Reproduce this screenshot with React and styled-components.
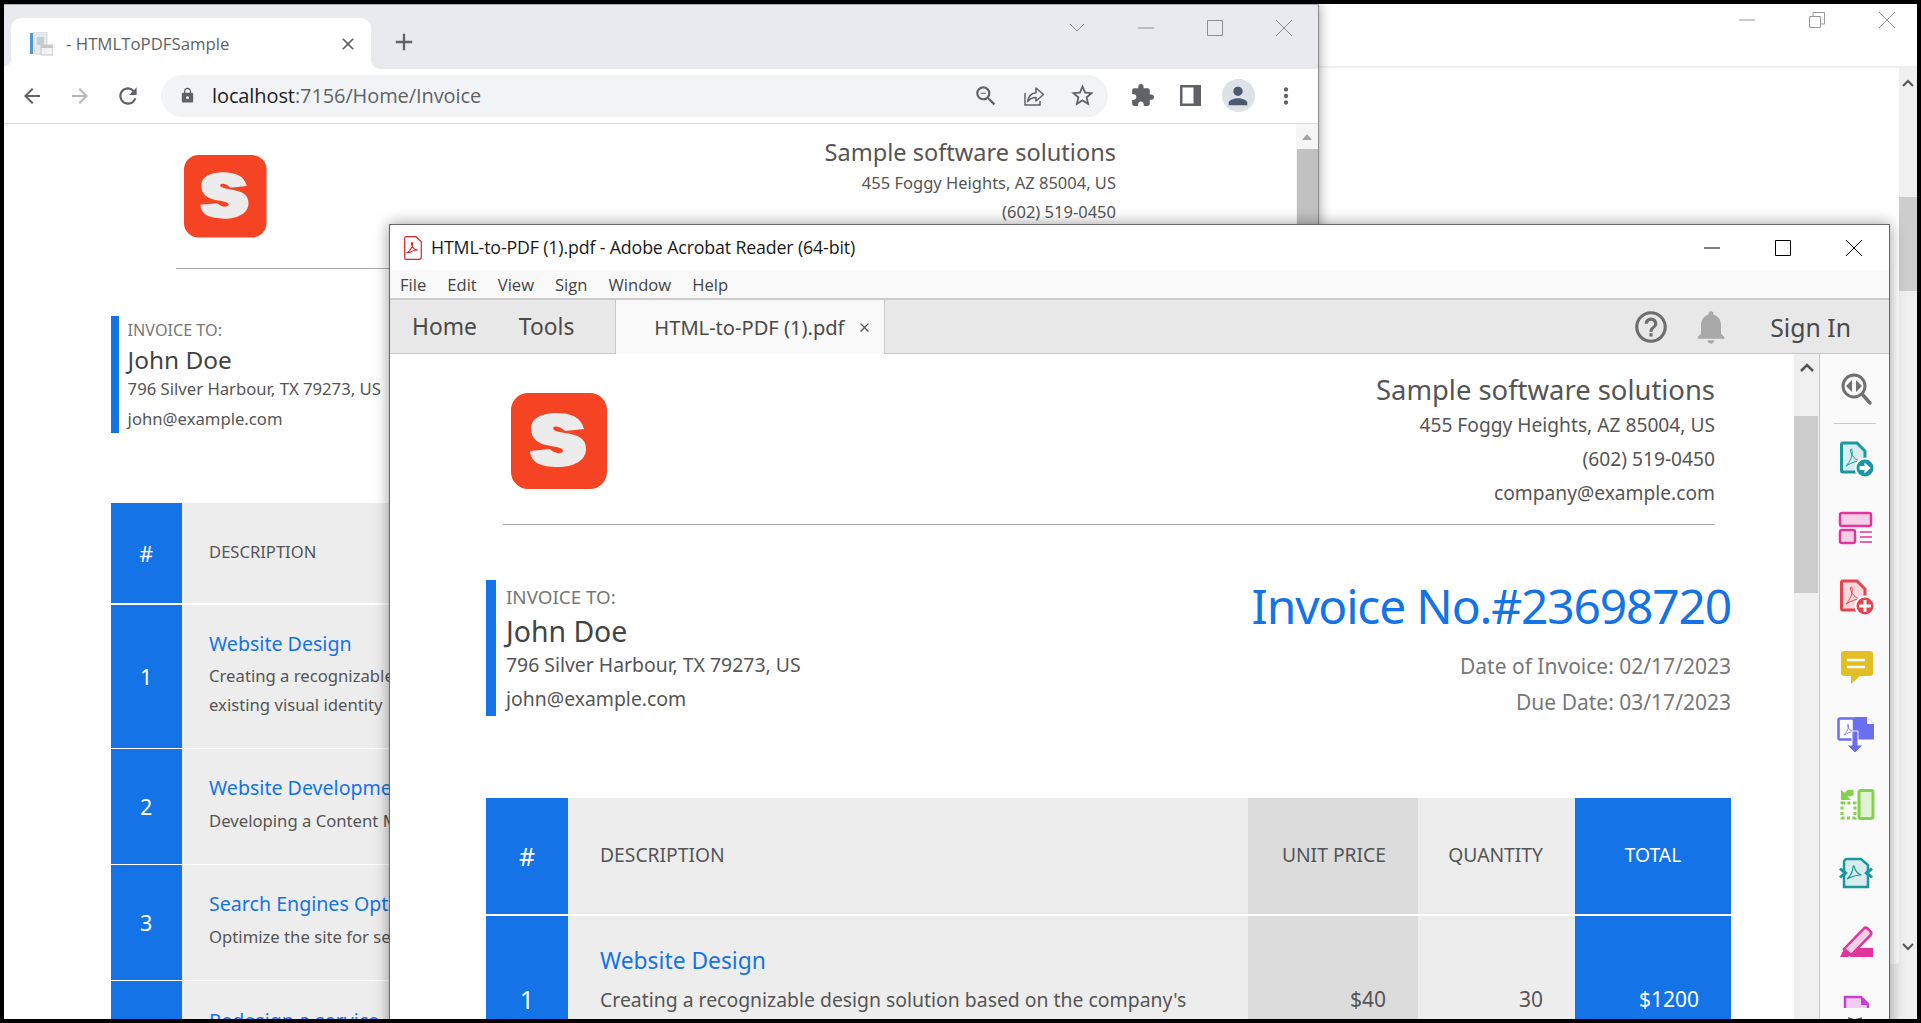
import React from 'react'
import styled, { createGlobalStyle } from 'styled-components'
import {
  MdArrowBack, MdArrowForward, MdRefresh, MdLock, MdZoomOut, MdStarBorder, MdExtension,
  MdPerson, MdMoreVert, MdClose, MdAdd, MdHelpOutline, MdNotifications,
} from 'react-icons/md'

const u = (n) => `calc(var(--k) * ${n}px)`
const BLUE = '#1473e6'
const SHEET_FONT = '"Noto Sans", "Open Sans", sans-serif'
const UI_FONT = '"Open Sans", "Noto Sans", sans-serif'

const Global = createGlobalStyle`
  html, body { margin: 0; padding: 0; background: #000; overflow: hidden; }
  * { box-sizing: border-box; }
`

const Screen = styled.div`
  position: relative;
  width: 1921px;
  height: 1023px;
  background: #000;
  overflow: hidden;
`
const Desktop = styled.div`
  position: absolute;
  left: 4px;
  top: 4px;
  width: 1913px;
  height: 1015px;
  overflow: hidden;
`

/* window at the very back */
const BackWindow = styled.div`
  position: absolute;
  inset: 0;
  display: flex;
  flex-direction: column;
  background: #f0f0f0;
`
const BackTitle = styled.div`
  height: 64px;
  flex: none;
  margin-right: -5px;
  background: #fff;
  border-bottom: 2px solid #f0f0f0;
  display: flex;
  justify-content: flex-end;
`
const BackControl = styled.div`
  width: 70px;
  height: 32px;
  display: flex;
  align-items: center;
  justify-content: center;
  color: #999;
`
const BackBody = styled.div`
  flex: 1;
  display: flex;
  min-height: 0;
`
const BackContent = styled.div`
  flex: 1;
  height: 896px;
  background: #fff;
  border-bottom-right-radius: 4px;
`
const BackScroll = styled.div`
  width: 18px;
  display: flex;
  flex-direction: column;
  align-items: center;
  color: #555;
  height: 885px;
`
const BackThumb = styled.div`
  width: 18px;
  height: 96px;
  margin-top: 108px;
  background: #cdcdcd;
`
const BackArrow = styled.div`
  margin-top: ${(p) => p.$top}px;
  height: 10px;
  display: flex;
`

/* chrome window */
const ChromeWindow = styled.div`
  position: absolute;
  left: 0;
  top: 0;
  width: 1315px;
  height: 1015px;
  display: flex;
  flex-direction: column;
  background: #fff;
  border-top: 1px solid #a9abad;
  border-right: 1px solid #8a8a8a;
  box-shadow: 0 0 12px rgba(0, 0, 0, 0.4);
  font-family: ${UI_FONT};
`
const TabStrip = styled.div`
  height: 64px;
  flex: none;
  display: flex;
  padding-left: 7px;
  background: #e8eaed;
`
const BrowserTab = styled.div`
  position: relative;
  width: 360px;
  height: 51px;
  margin-top: 13px;
  display: flex;
  align-items: center;
  padding-left: 19px;
  background: #fff;
  border-radius: 10px 10px 0 0;
  color: #5f6368;
  font-size: 16.8px;

  &::before,
  &::after {
    content: '';
    position: absolute;
    bottom: 0;
    width: 10px;
    height: 10px;
  }
  &::before {
    left: -7px;
    width: 7px;
    background: radial-gradient(circle at 0 0, #e8eaed 7px, #fff 7.5px);
  }
  &::after {
    right: -10px;
    background: radial-gradient(circle at 100% 0, #e8eaed 10px, #fff 10.5px);
  }
`
const TabTitle = styled.span`
  margin-left: 13px;
  flex: 1;
`
const TabClose = styled.span`
  display: flex;
  margin-right: 13px;
  color: #5f6368;
`
const NewTab = styled.span`
  display: flex;
  align-self: flex-start;
  margin: 23px 0 0 19px;
  color: #5f6368;
`
const WindowButtons = styled.div`
  margin-left: auto;
  display: flex;
  color: #8a8d91;
`
const WindowButton = styled.div`
  width: 69px;
  height: 46px;
  display: flex;
  align-items: center;
  justify-content: center;
`
const Toolbar = styled.div`
  height: 55px;
  flex: none;
  display: flex;
  align-items: center;
  padding: 0 0 1px 8px;
  gap: 8px;
  background: #fff;
  border-bottom: 1px solid #dadce0;
`
const ToolButton = styled.div`
  width: 40px;
  height: 40px;
  flex: none;
  display: flex;
  align-items: center;
  justify-content: center;
  color: ${(p) => p.$color || '#5f6368'};
`
const Omnibox = styled.div`
  width: 947px;
  height: 42px;
  margin: 0 6px 0 5px;
  padding: 0 6px 0 18px;
  display: flex;
  align-items: center;
  background: #f1f3f4;
  border-radius: 21px;
  color: #5f6368;
  font-size: 20px;
`
const Url = styled.div`
  margin-left: 16px;
  flex: 1;
  letter-spacing: -0.1px;
  b { color: #202124; font-weight: 400; }
`
const OmniActions = styled.div`
  display: flex;
  gap: 8px;
`
const Avatar = styled.div`
  width: 33px;
  height: 33px;
  border-radius: 50%;
  background: #dee1e6;
  display: flex;
  align-items: center;
  justify-content: center;
  color: #4a5a70;
`
const ChromeBody = styled.div`
  flex: 1;
  display: flex;
  min-height: 0;
`
const ChromePage = styled.div`
  flex: 1;
  overflow: hidden;
`
const ChromeScroll = styled.div`
  width: 22px;
  flex: none;
  display: flex;
  flex-direction: column;
  align-items: center;
  background: #f5f5f5;
`
const ChromeThumb = styled.div`
  width: 21px;
  flex: 1;
  margin-top: 9px;
  background: #c1c1c1;
`
const ScrollUp = styled.div`
  margin-top: ${(p) => p.$top}px;
  width: 0;
  height: 0;
  border-left: 5px solid transparent;
  border-right: 5px solid transparent;
  border-bottom: 6px solid #a3a3a3;
`

/* acrobat window */
const ReaderWindow = styled.div`
  position: absolute;
  left: 385px;
  top: 220px;
  width: 1501px;
  height: 820px;
  display: flex;
  flex-direction: column;
  background: #fff;
  border: 1px solid #666;
  box-shadow: 0 0 14px rgba(0, 0, 0, 0.4);
`
const ReaderTitle = styled.div`
  height: 45px;
  flex: none;
  display: flex;
  align-items: center;
  padding-left: 14px;
  background: #fff;
  color: #1a1a1a;
  font: 17.8px ${UI_FONT};
`
const ReaderTitleText = styled.span`
  margin-left: 9px;
  margin-top: -2px;
  letter-spacing: -0.15px;
`
const ReaderButtons = styled.div`
  margin-left: auto;
  display: flex;
  color: #000;
`
const ReaderButton = styled.div`
  width: 71px;
  height: 45px;
  display: flex;
  align-items: center;
  justify-content: center;
`
const MenuBar = styled.div`
  height: 30px;
  flex: none;
  display: flex;
  align-items: center;
  gap: 21px;
  padding-left: 10px;
  background: #f9f9f9;
  border-bottom: 2px solid #ccc;
  color: #444;
  font: 16.6px ${UI_FONT};
`
const TabBar = styled.div`
  height: 54px;
  flex: none;
  display: flex;
  align-items: center;
  padding: 0 38px 0 22px;
  background: #e8e8e8;
  border-bottom: 1px solid #c8c8c8;
  color: #4a4a4a;
  font: 22.8px ${SHEET_FONT};
`
const TabLink = styled.span`
  margin-right: 42px;
`
const DocTab = styled.div`
  width: 270px;
  height: 54px;
  align-self: flex-start;
  margin-left: -1px;
  display: flex;
  align-items: center;
  padding: 0 12px 0 38px;
  justify-content: space-between;
  background: #f9f9f9;
  border: 1px solid #c8c8c8;
  border-width: 0 1px;
  font-size: 20.1px;
`
const DocClose = styled.span`
  display: flex;
  color: #555;
`
const TabRight = styled.div`
  margin-left: auto;
  display: flex;
  align-items: center;
  font-size: 24.8px;
`
const HelpIcon = styled.span`
  display: flex;
  margin-right: 21px;
  color: #6e6e6e;
`
const BellIcon = styled.span`
  display: flex;
  margin-right: 39px;
  color: #a8a8a8;
`
const ReaderBody = styled.div`
  flex: 1;
  display: flex;
  min-height: 0;
`
const ReaderDoc = styled.div`
  flex: 1;
  overflow: hidden;
`
const ReaderScroll = styled.div`
  width: 25px;
  flex: none;
  display: flex;
  flex-direction: column;
  background: #f0f0f0;
  color: #555;
`
const ReaderArrow = styled.div`
  height: 62px;
  flex: none;
  display: flex;
  justify-content: center;
  padding-top: 9px;
`
const ReaderThumb = styled.div`
  height: 177px;
  background: #ccc;
  margin-right: 1px;
`
const ToolPanel = styled.div`
  width: 70px;
  flex: none;
  display: flex;
  flex-direction: column;
  align-items: center;
  padding-top: 14px;
  background: #fafafa;
  border-left: 1px solid #c8c8c8;
`
const PanelRule = styled.div`
  width: 42px;
  height: 1px;
  flex: none;
  margin: 15px 0;
  background: #c8c8c8;
`
const PanelIcon = styled.svg`
  width: 40px;
  height: 40px;
  flex: none;
  margin-bottom: ${(p) => (p.$flush ? 0 : 29)}px;
`

/* invoice, shared by both windows and scaled through --k */
const Sheet = styled.div`
  --k: ${(p) => p.$k};
  padding: ${(p) => p.$top}px 0 0 ${(p) => p.$left}px;
  font-family: ${SHEET_FONT};
  color: #555;
`
const SheetHeader = styled.div`
  width: ${(p) => p.$width}px;
  height: ${u(153)};
  margin-left: ${(p) => p.$inset}px;
  padding-left: 8px;
  display: flex;
  justify-content: space-between;
  border-bottom: 1px solid #aaa;
`
const Logo = styled.svg`
  width: ${u(96)};
  height: ${u(96)};
  margin-top: ${u(21)};
`
const Company = styled.div`
  text-align: right;
  font-size: ${u(19.2)};
  line-height: ${u(34)};
`
const CompanyName = styled.div`
  font-size: ${u(27.4)};
  line-height: ${u(36)};
`
const BillRow = styled.div`
  width: ${u(1245)};
  margin-top: ${u(55)};
  display: flex;
  justify-content: space-between;
`
const BillTo = styled.div`
  height: ${u(136)};
  padding-left: ${u(10)};
  border-left: ${u(10)} solid ${BLUE};
  font-size: ${u(19.4)};
  line-height: ${u(34)};
`
const BillLabel = styled.div`
  color: #777;
  font-size: ${u(18.8)};
`
const BillName = styled.div`
  font-size: ${u(28.4)};
  color: #444;
`
const InvoiceMeta = styled.div`
  height: ${u(136)};
  text-align: right;
  color: #777;
  font-size: ${u(21)};
  line-height: ${u(36)};
`
const InvoiceNumber = styled.div`
  color: ${BLUE};
  font-size: ${u(48)};
  letter-spacing: ${u(-1.2)};
  line-height: ${u(52)};
  margin-bottom: ${u(16)};
`
const Table = styled.div`
  width: ${u(1245)};
  margin-top: ${u(82)};
  display: grid;
  grid-template-columns: ${u(82)} 1fr ${u(170)} ${u(157)} ${u(156)};
  row-gap: ${u(2)};
`
const Cell = styled.div`
  display: flex;
  align-items: center;
  justify-content: ${(p) => p.$align || 'flex-start'};
  padding: 0 ${u(32)} ${(p) => (p.$head ? u(4) : 0)};
  min-height: ${(p) => (p.$head ? u(116) : 'auto')};
  background: ${(p) => (p.$blue ? BLUE : p.$dark ? '#dcdcdc' : '#ededed')};
  color: ${(p) => (p.$blue ? '#fff' : '#555')};
  font-size: ${(p) => (p.$head ? u(19.3) : u(21))};
`
const NumberCell = styled(Cell)`
  padding: 0;
  justify-content: center;
  font-size: ${u(25)};
`
const DescCell = styled.div`
  background: #ededed;
  padding: ${u(28)} ${u(32)} ${u(33)};
  font-size: ${u(19.4)};
  line-height: ${u(33)};
`
const ItemTitle = styled.div`
  color: ${BLUE};
  font-size: ${u(22.8)};
  line-height: ${u(34)};
  margin-bottom: ${u(5)};
`

const ITEMS = [
  ['1', 'Website Design', "Creating a recognizable design solution based on the company's existing visual identity", '$40', '30', '$1200'],
  ['2', 'Website Development', 'Developing a Content Management System-based Website', '$40', '80', '$3200'],
  ['3', 'Search Engines Optimization', 'Optimize the site for search engines (SEO)', '$40', '20', '$800'],
  ['4', 'Redesign a service', 'Redesign the existing service pages', '$40', '10', '$400'],
]

function SLogo() {
  return (
    <Logo viewBox="0 0 96 96">
      <rect width="96" height="96" rx="17" fill="#f44424" />
      <path
        fill="#ececec"
        d="M73 36 L54 38 C50 34 44 32 42 35 C42 38 48 39 54 40 C68 42 75 46 75 56 C75 68 62 74 47 74 C30 74 20 70 19 58 L39 56 C42 60 50 62 52 58 C52 55 46 54 40 53 C27 51 20 46 20 35 C20 25 32 20 45 20 C60 20 70 24 73 36 Z"
      />
    </Logo>
  )
}

function Invoice({ k, top, left, inset, width }) {
  return (
    <Sheet $k={k} $top={top} $left={left}>
      <SheetHeader $inset={inset} $width={width}>
        <SLogo />
        <Company>
          <CompanyName>Sample software solutions</CompanyName>
          <div>455 Foggy Heights, AZ 85004, US</div>
          <div>(602) 519-0450</div>
          <div>company@example.com</div>
        </Company>
      </SheetHeader>
      <BillRow>
        <BillTo>
          <BillLabel>INVOICE TO:</BillLabel>
          <BillName>John Doe</BillName>
          <div>796 Silver Harbour, TX 79273, US</div>
          <div>john@example.com</div>
        </BillTo>
        <InvoiceMeta>
          <InvoiceNumber>Invoice No.#23698720</InvoiceNumber>
          <div>Date of Invoice: 02/17/2023</div>
          <div>Due Date: 03/17/2023</div>
        </InvoiceMeta>
      </BillRow>
      <Table>
        <NumberCell $head $blue>#</NumberCell>
        <Cell $head>DESCRIPTION</Cell>
        <Cell $head $dark $align="flex-end">UNIT PRICE</Cell>
        <Cell $head $align="flex-end">QUANTITY</Cell>
        <Cell $head $blue $align="center">TOTAL</Cell>
        {ITEMS.map(([n, title, desc, price, qty, total]) => (
          <React.Fragment key={n}>
            <NumberCell $blue>{n}</NumberCell>
            <DescCell>
              <ItemTitle>{title}</ItemTitle>
              {desc}
            </DescCell>
            <Cell $dark $align="flex-end">{price}</Cell>
            <Cell $align="flex-end">{qty}</Cell>
            <Cell $blue $align="flex-end">{total}</Cell>
          </React.Fragment>
        ))}
      </Table>
    </Sheet>
  )
}

const Glyph = ({ children, w = 16, h = 16, sw = 1 }) => (
  <svg width={w} height={h} viewBox={`0 0 ${w} ${h}`} fill="none" stroke="currentColor" strokeWidth={sw}>
    {children}
  </svg>
)

const Favicon = () => (
  <svg width="23" height="24" viewBox="0 0 23 24">
    <rect x="0" y="1" width="3" height="21" fill="#4a9ad8" />
    <rect x="4" y="0" width="13" height="22" fill="#e6eaed" stroke="#d5dade" />
    <rect x="7" y="5" width="7" height="8" fill="#c6cdd3" />
    <rect x="11" y="13" width="12" height="10" fill="#f0f2f4" stroke="#c2c9cf" />
    <rect x="11" y="13" width="12" height="3" fill="#c2c9cf" />
  </svg>
)

const ShareIcon = () => (
  <svg width="24" height="24" viewBox="0 0 24 24" fill="none" stroke="currentColor" strokeWidth="1.5">
    <path d="M3 9v12h15v-4" />
    <path d="M14 4l7.5 6.5L14 17v-3.6c-3.6 0-6.4 1.2-8.4 4.2.6-4.800 3.400-8.300 8.400-8.900z" strokeLinejoin="round" />
  </svg>
)

const SidePanelIcon = () => (
  <svg width="21" height="21" viewBox="0 0 21 21">
    <rect width="21" height="21" fill="#5f6368" />
    <rect x="2.500" y="2.500" width="11" height="16" fill="#fff" />
  </svg>
)

const PdfGlyph = () => (
  <svg width="18" height="24" viewBox="0 0 18 24" fill="none" stroke="#e3202a" strokeWidth="1.200">
    <path d="M2 .7h10l5.300 5v15.600a2 2 0 0 1-2 2H2a1.300 1.300 0 0 1-1.300-1.300V2A1.300 1.300 0 0 1 2 .7z" />
    <path d="M3.500 16.500C6 15 8.500 11 8.500 7.500c0-1.500-1.500-1-1 .8.700 2.700 3 5.700 6.500 5.700-3 0-6 1-8.500 2.500z" />
  </svg>
)

const swoosh = 'M11 27C15 23 18 16 17 11c-.6-2-2-1-1.500 1 1 4 4 9 10 10-3.500-.2-9 1.500-14.500 5z'

const ToolIcons = () => (
  <>
    <PanelIcon $flush viewBox="0 0 40 40" fill="none">
      <circle cx="19" cy="18" r="11" stroke="#707070" strokeWidth="3" />
      <path d="M27 26l8 9" stroke="#707070" strokeWidth="3.500" strokeLinecap="round" />
      <path d="M17 12v12l-6-6zM21 12v12l6-6z" fill="#707070" />
    </PanelIcon>
    <PanelRule />
    <PanelIcon viewBox="0 0 40 40" fill="none">
      <path d="M8 4h14l8 8v21H8a1.500 1.500 0 0 1-1.500-1.500v-26A1.500 1.500 0 0 1 8 4z" fill="#d8eef0" stroke="#1a97a0" strokeWidth="3" />
      <path d={swoosh} stroke="#1a97a0" strokeWidth="1" />
      <circle cx="30" cy="29" r="9.500" fill="#1a97a0" stroke="#fafafa" strokeWidth="2" />
      <path d="M24.500 27h5v-3.500l6 5.500-6 5.500V31h-5z" fill="#fff" />
    </PanelIcon>
    <PanelIcon viewBox="0 0 40 40" fill="#f6cfe6" stroke="#e0359a" strokeWidth="2.500">
      <rect x="5" y="5" width="31" height="13" rx="2" />
      <rect x="5" y="22" width="15" height="13" rx="2" />
      <path d="M25 24h12M25 29h12M25 34h12" strokeWidth="1.500" fill="none" />
    </PanelIcon>
    <PanelIcon viewBox="0 0 40 40" fill="none">
      <path d="M8 4h14l8 8v21H8a1.500 1.500 0 0 1-1.500-1.500v-26A1.500 1.500 0 0 1 8 4z" fill="#fadadd" stroke="#e5434f" strokeWidth="3" />
      <path d={swoosh} stroke="#e5434f" strokeWidth="1" />
      <circle cx="30" cy="29" r="9.500" fill="#e5434f" stroke="#fafafa" strokeWidth="2" />
      <path d="M28.500 23h3v4.500H36v3h-4.500V35h-3v-4.500H24v-3h4.500z" fill="#fff" />
    </PanelIcon>
    <PanelIcon viewBox="0 0 40 40">
      <path d="M9 5h26a3 3 0 0 1 3 3v19a3 3 0 0 1-3 3H25l-9 8v-8H9a3 3 0 0 1-3-3V8a3 3 0 0 1 3-3z" fill="#e3bf26" />
      <path d="M12 14h18M12 21h18" stroke="#fff" strokeWidth="2.500" />
    </PanelIcon>
    <PanelIcon viewBox="0 0 40 40" fill="none">
      <path d="M5 3.500h14v21H5a1.500 1.500 0 0 1-1.500-1.500V5A1.500 1.500 0 0 1 5 3.500z" fill="#fff" stroke="#6b6ef0" strokeWidth="2.500" />
      <path d="M9 20c3-3 5-7 4.500-10-.5-1.500-1.500-.5-1 1 1 3 3 5 6 5.500-3 0-6 1.500-9.500 3.500z" stroke="#6b6ef0" strokeWidth=".8" />
      <path d="M20 2h12l7 7v15.500H20z" fill="#6b6ef0" />
      <path d="M32 2l7 7h-7z" fill="#fafafa" />
      <path d="M17 16h6v14h5l-8 8-8-8h5z" fill="#6b6ef0" stroke="#fafafa" strokeWidth="1" />
    </PanelIcon>
    <PanelIcon viewBox="0 0 40 40" fill="none">
      <rect x="24" y="6.500" width="14" height="28" rx="2" fill="#e2f3d5" stroke="#82d24a" strokeWidth="3" />
      <path d="M7 19h13v15H7z" stroke="#82d24a" strokeWidth="3" strokeDasharray="3 2.500" />
      <path d="M6 6v10h10l-3.500-3.500 6-1V6h-6l-2.800 2.800z" fill="#82d24a" />
    </PanelIcon>
    <PanelIcon viewBox="0 0 40 40" fill="none">
      <path d="M12 6h14l7 6v6l-2 2 2 2v12H9V22l2-2-2-2v-9a3 3 0 0 1 3-3z" fill="#d8ecee" stroke="#1a97a0" strokeWidth="2.500" />
      <path d="M12 26c3.500-2.500 6-8 6-12 0-1.500 1.500-1.500 1.500 0 .3 3 3 7 7 8-3 0-9 1-14.500 4z" stroke="#1a97a0" strokeWidth="1.200" />
      <path d="M5 15.500l5 4.500-5 4.500M37 15.500l-5 4.500 5 4.500" stroke="#1a97a0" strokeWidth="3" />
    </PanelIcon>
    <PanelIcon viewBox="0 0 40 40" fill="none">
      <path d="M9 27L29 6.500a2.500 2.500 0 0 1 3.500 0l3 3a2.500 2.500 0 0 1 0 3.500L16 33z" fill="#f6cfe6" stroke="#e0359a" strokeWidth="2.500" />
      <path d="M9 27l7 6-3 2H5z" fill="#e0359a" />
      <path d="M23 26h15v9H15z" fill="#e0359a" />
    </PanelIcon>
    <PanelIcon $flush viewBox="0 0 40 40" fill="none">
      <path d="M10 17V6h16l7 7v4" fill="#f0cdf3" stroke="#c93fd6" strokeWidth="2.500" />
      <path d="M26 6l7 8h-7z" fill="#c93fd6" />
      <path d="M13 27l7 2 7-2" stroke="#555" strokeWidth="1.500" />
    </PanelIcon>
  </>
)

export default function App() {
  return (
    <Screen>
      <Global />
      <Desktop>
        <BackWindow>
          <BackTitle>
            <BackControl>
              <Glyph><path d="M0 8h16" /></Glyph>
            </BackControl>
            <BackControl>
              <Glyph><path d="M.5 4.500h11v11H.5zM4 4V.5h11.500V12H12" /></Glyph>
            </BackControl>
            <BackControl>
              <Glyph><path d="M0 0l16 16M16 0L0 16" /></Glyph>
            </BackControl>
          </BackTitle>
          <BackBody>
            <BackContent />
            <BackScroll>
              <BackArrow $top={11}><Glyph w={12} h={8} sw={2}><path d="M1 7l5-5 5 5" /></Glyph></BackArrow>
              <BackThumb />
              <BackArrow $top={652}><Glyph w={12} h={8} sw={2}><path d="M1 1l5 5 5-5" /></Glyph></BackArrow>
            </BackScroll>
          </BackBody>
        </BackWindow>

        <ChromeWindow>
          <TabStrip>
            <BrowserTab>
              <Favicon />
              <TabTitle>- HTMLToPDFSample</TabTitle>
              <TabClose><MdClose size={20} /></TabClose>
            </BrowserTab>
            <NewTab><MdAdd size={28} /></NewTab>
            <WindowButtons>
              <WindowButton><Glyph><path d="M1 4l7 7 7-7" /></Glyph></WindowButton>
              <WindowButton><Glyph><path d="M0 8h16" /></Glyph></WindowButton>
              <WindowButton><Glyph><path d="M.5.5h15v15H.5z" /></Glyph></WindowButton>
              <WindowButton><Glyph><path d="M0 0l16 16M16 0L0 16" /></Glyph></WindowButton>
            </WindowButtons>
          </TabStrip>
          <Toolbar>
            <ToolButton><MdArrowBack size={24} /></ToolButton>
            <ToolButton $color="#b5b7ba"><MdArrowForward size={24} /></ToolButton>
            <ToolButton><MdRefresh size={26} /></ToolButton>
            <Omnibox>
              <MdLock size={17} />
              <Url><b>localhost</b>:7156/Home/Invoice</Url>
              <OmniActions>
                <ToolButton><MdZoomOut size={26} /></ToolButton>
                <ToolButton><ShareIcon /></ToolButton>
                <ToolButton><MdStarBorder size={27} /></ToolButton>
              </OmniActions>
            </Omnibox>
            <ToolButton><MdExtension size={25} /></ToolButton>
            <ToolButton><SidePanelIcon /></ToolButton>
            <ToolButton><Avatar><MdPerson size={28} /></Avatar></ToolButton>
            <ToolButton><MdMoreVert size={26} /></ToolButton>
          </Toolbar>
          <ChromeBody>
            <ChromePage>
              <Invoice k={0.86} top={13} left={107} inset={65} width={940} />
            </ChromePage>
            <ChromeScroll>
              <ScrollUp $top={10} />
              <ChromeThumb />
            </ChromeScroll>
          </ChromeBody>
        </ChromeWindow>

        <ReaderWindow>
          <ReaderTitle>
            <PdfGlyph />
            <ReaderTitleText>HTML-to-PDF (1).pdf - Adobe Acrobat Reader (64-bit)</ReaderTitleText>
            <ReaderButtons>
              <ReaderButton><Glyph><path d="M0 8h16" /></Glyph></ReaderButton>
              <ReaderButton><Glyph><path d="M.5.5h15v15H.5z" /></Glyph></ReaderButton>
              <ReaderButton><Glyph><path d="M0 0l16 16M16 0L0 16" /></Glyph></ReaderButton>
            </ReaderButtons>
          </ReaderTitle>
          <MenuBar>
            <span>File</span>
            <span>Edit</span>
            <span>View</span>
            <span>Sign</span>
            <span>Window</span>
            <span>Help</span>
          </MenuBar>
          <TabBar>
            <TabLink>Home</TabLink>
            <TabLink>Tools</TabLink>
            <DocTab>
              HTML-to-PDF (1).pdf
              <DocClose><MdClose size={15} /></DocClose>
            </DocTab>
            <TabRight>
              <HelpIcon><MdHelpOutline size={38} /></HelpIcon>
              <BellIcon><MdNotifications size={40} /></BellIcon>
              Sign In
            </TabRight>
          </TabBar>
          <ReaderBody>
            <ReaderDoc>
              <Invoice k={1} top={18} left={96} inset={17} width={1212} />
            </ReaderDoc>
            <ReaderScroll>
              <ReaderArrow><Glyph w={14} h={9} sw={2.500}><path d="M1 8l6-6 6 6" /></Glyph></ReaderArrow>
              <ReaderThumb />
            </ReaderScroll>
            <ToolPanel>
              <ToolIcons />
            </ToolPanel>
          </ReaderBody>
        </ReaderWindow>
      </Desktop>
    </Screen>
  )
}
